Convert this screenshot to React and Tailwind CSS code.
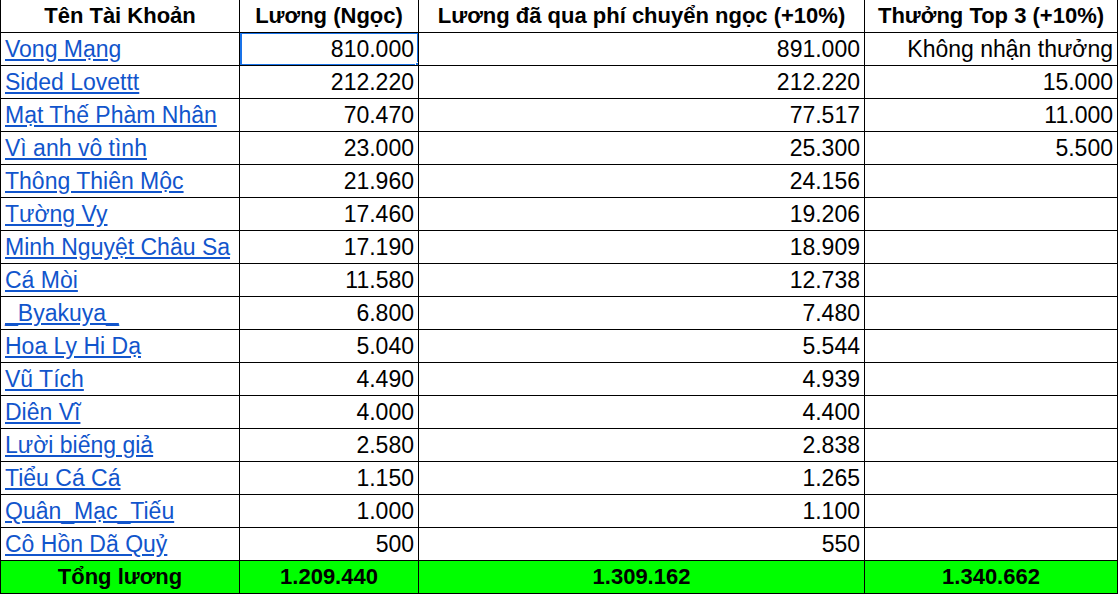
const rows = [
["Vong Mạng","810.000","891.000","Không nhận thưởng"],
["Sided Lovettt","212.220","212.220","15.000"],
["Mạt Thế Phàm Nhân","70.470","77.517","11.000"],
["Vì anh vô tình","23.000","25.300","5.500"],
["Thông Thiên Mộc","21.960","24.156",""],
["Tường Vy","17.460","19.206",""],
["Minh Nguyệt Châu Sa","17.190","18.909",""],
["Cá Mòi","11.580","12.738",""],
["_Byakuya_","6.800","7.480",""],
["Hoa Ly Hi Dạ","5.040","5.544",""],
["Vũ Tích","4.490","4.939",""],
["Diên Vĩ","4.000","4.400",""],
["Lười biếng giả","2.580","2.838",""],
["Tiểu Cá Cá","1.150","1.265",""],
["Quân_Mạc_Tiếu","1.000","1.100",""],
["Cô Hồn Dã Quỷ","500","550",""],
];
const cell = "h-[33px] border-r border-b border-black flex items-center px-[4px] whitespace-nowrap overflow-hidden";
export default function App(){
  return (
    <div className="w-[1119px] h-[595px] bg-white overflow-hidden" style={{fontFamily:'"Liberation Sans", Arial, sans-serif'}}>
      <div className="grid grid-cols-[239px_179px_446px_253px] border-l border-black text-[23px] leading-none text-black">
        {["Tên Tài Khoản","Lương (Ngọc)","Lương đã qua phí chuyển ngọc (+10%)","Thưởng Top 3 (+10%)"].map((h,i)=>(
          <div key={i} className={cell+" justify-center font-bold text-[22px]"}>{h}</div>
        ))}
        {rows.map((r,ri)=>(
          [<div key={ri+"a"} className={cell}><span className="text-[#1155cc] underline underline-offset-2">{r[0]}</span></div>,
           <div key={ri+"b"} className={cell+" justify-end relative"}>{r[1]}{ri===0 && <div className="absolute left-0 top-[-1px] w-[179px] h-[34px] border-2 border-[#1a73e8]"><div className="absolute right-[-4px] bottom-[-4px] w-[6px] h-[6px] bg-[#1a73e8] border border-white"></div></div>}</div>,
           <div key={ri+"c"} className={cell+" justify-end"}>{r[2]}</div>,
           <div key={ri+"d"} className={cell+" justify-end"}>{r[3]}</div>]
        ))}
        {["Tổng lương","1.209.440","1.309.162","1.340.662"].map((h,i)=>(
          <div key={"t"+i} className={cell+" justify-center font-bold bg-[#00ff00] text-[22px]"}>{h}</div>
        ))}
      </div>
    </div>
  );
}
